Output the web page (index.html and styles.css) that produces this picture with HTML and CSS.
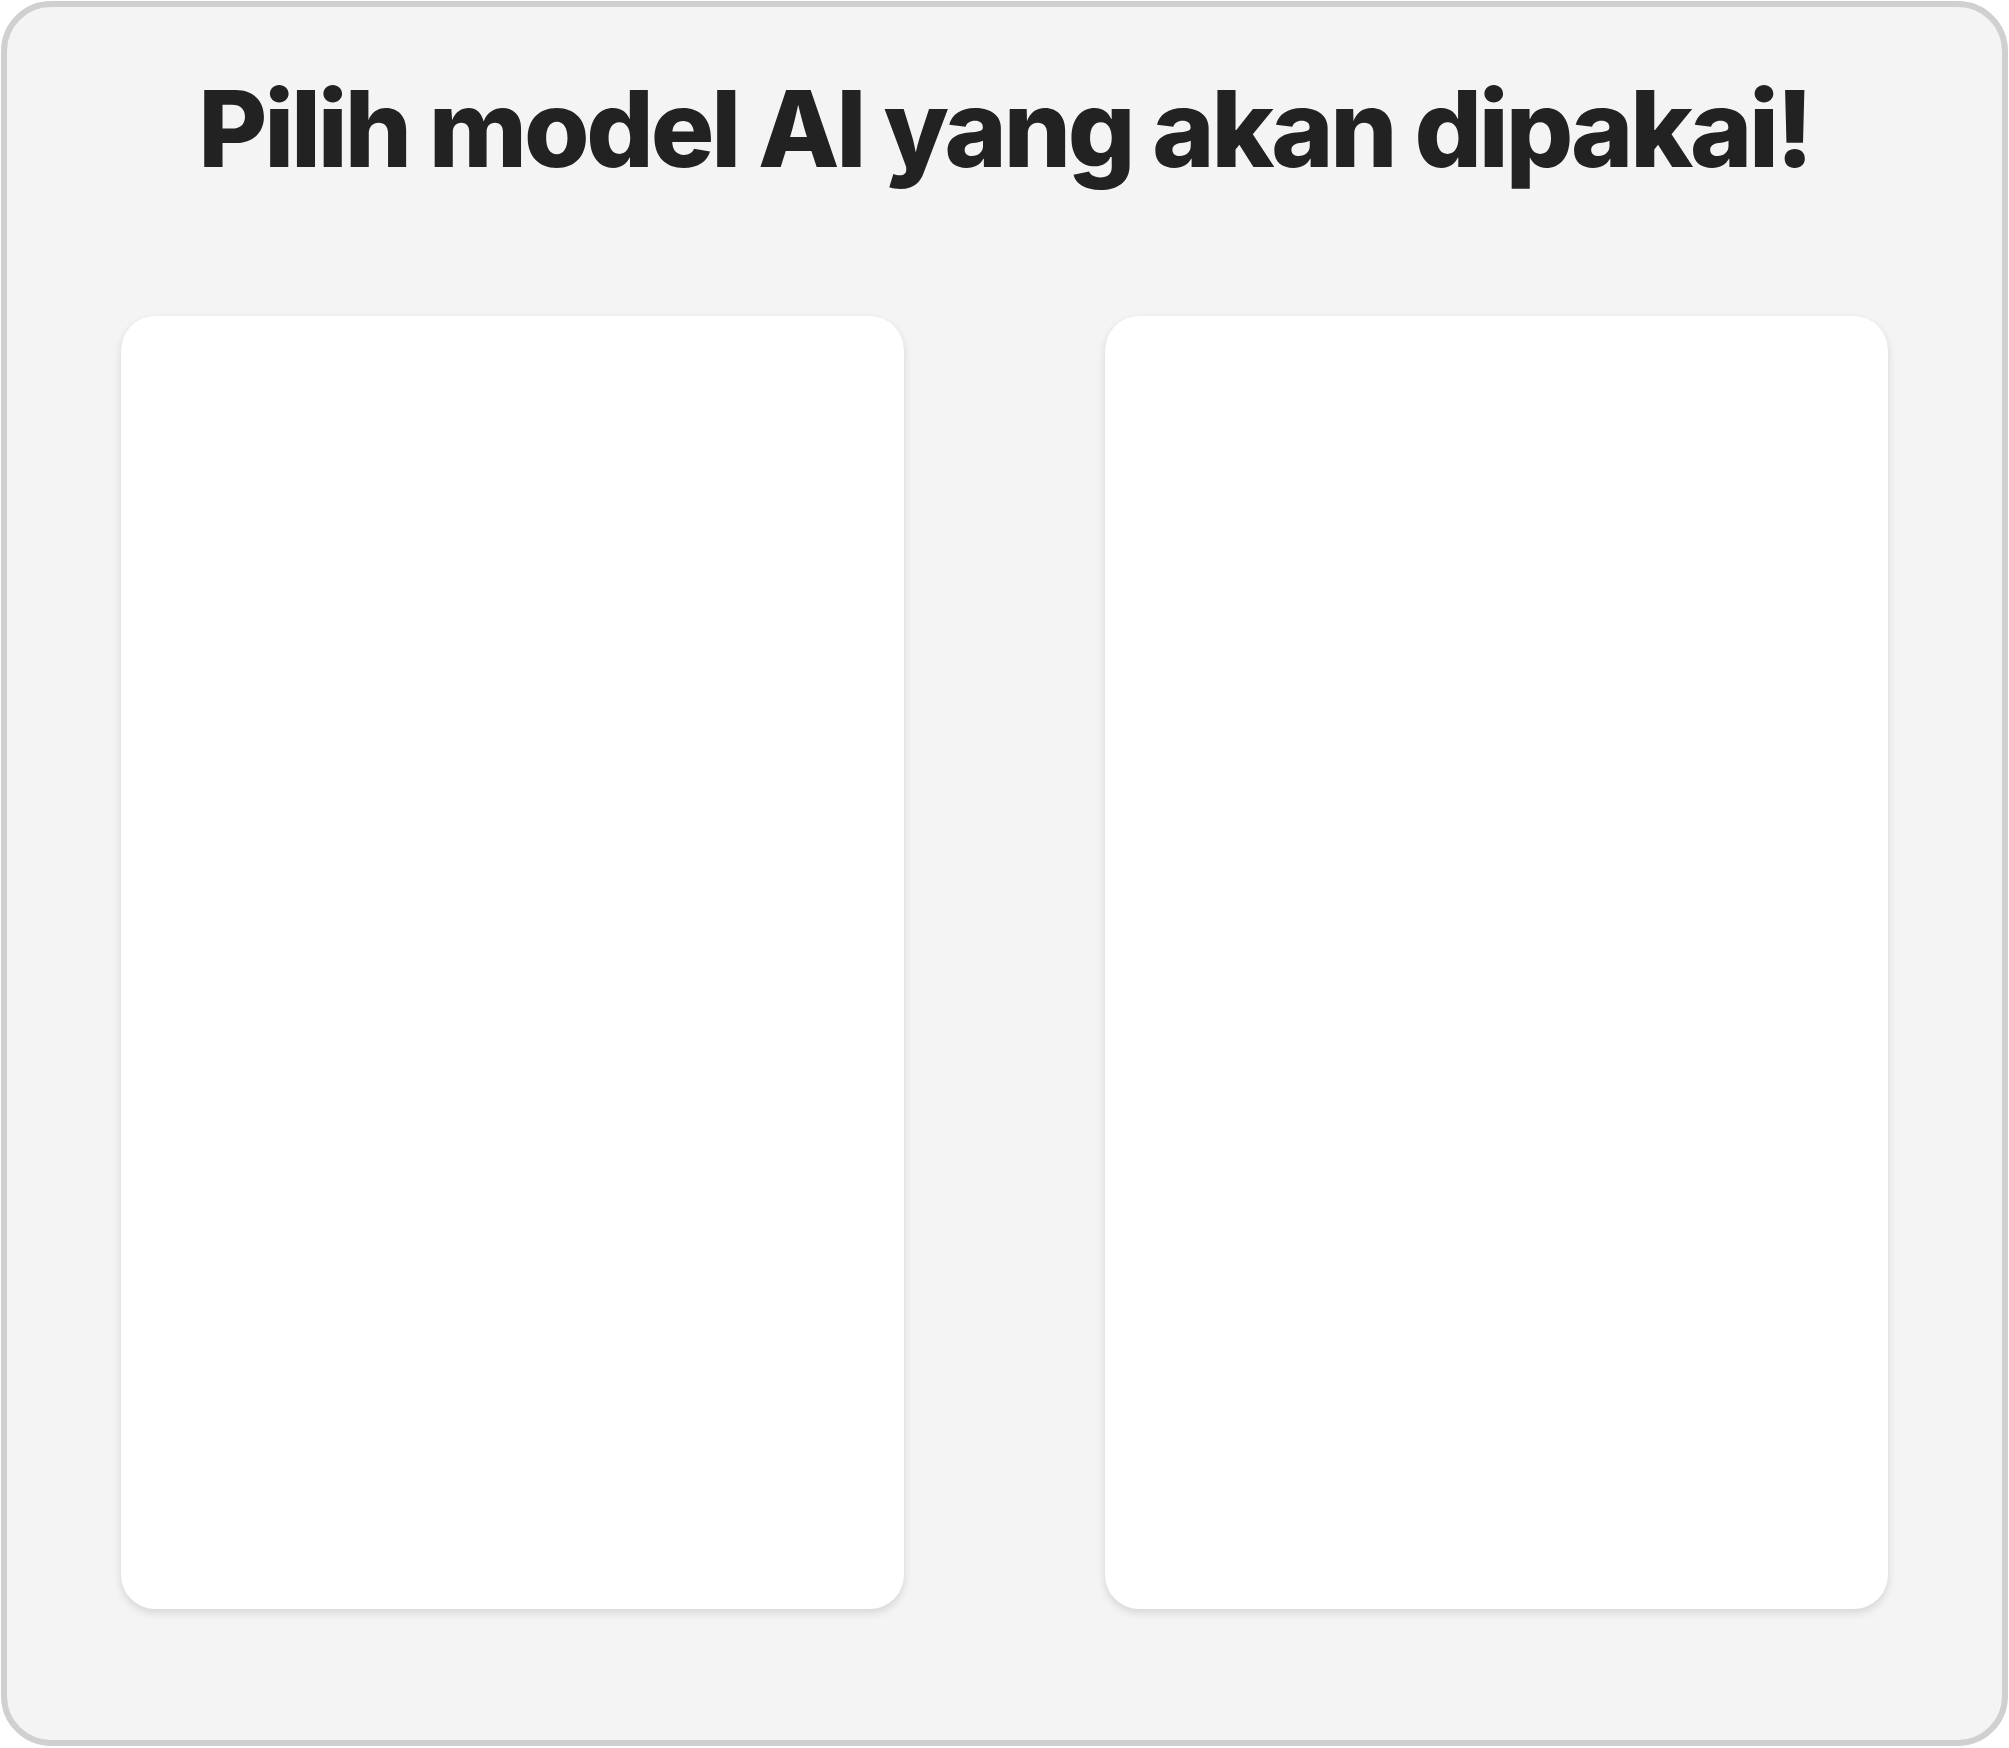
FILE: index.html
```html
<!DOCTYPE html>
<html lang="id">
<head>
<meta charset="utf-8">
<title>Pilih model AI</title>
<link rel="stylesheet" href="styles.css">
</head>
<body>
<main class="frame">
  <h1 class="title">Pilih model AI yang akan dipakai!</h1>
  <section class="cards">
    <div class="card"></div>
    <div class="card"></div>
  </section>
</main>
</body>
</html>
```

FILE: styles.css
```css
html, body {
  margin: 0;
  padding: 0;
  background: #ffffff;
}
body {
  width: 2009px;
  height: 1748px;
  padding: 1px 1px 2px 1px;
  box-sizing: border-box;
}
.frame {
  box-sizing: border-box;
  width: 100%;
  height: 100%;
  border: 6px solid #d0d0d0;
  border-radius: 50px;
  background: #f4f4f4;
  display: flex;
  flex-direction: column;
  align-items: center;
}
.title {
  margin: 58px 0 0 0;
  font-family: "Inter", "Noto Sans", sans-serif;
  font-weight: 800;
  font-size: 106px;
  line-height: 128px;
  letter-spacing: -3.2px;
  color: #222222;
  text-align: center;
}
.cards {
  margin-top: 123px;
  display: flex;
  gap: 201px;
}
.card {
  width: 783px;
  height: 1293px;
  background: #ffffff;
  border-radius: 34px;
  box-shadow: 0 4px 8px rgba(0, 0, 0, 0.12), 0 0 1px rgba(0, 0, 0, 0.06);
}
```
